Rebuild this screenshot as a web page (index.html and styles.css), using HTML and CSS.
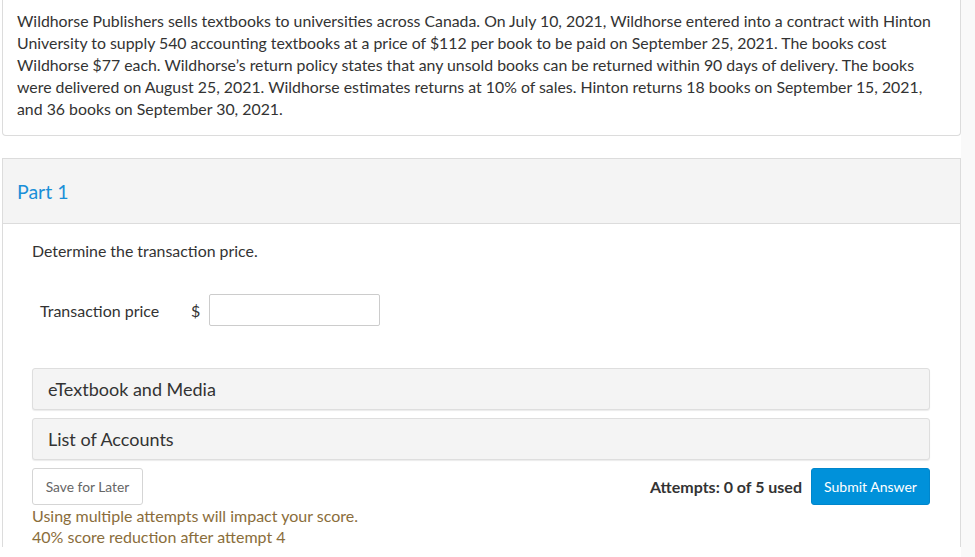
FILE: index.html
```html
<!DOCTYPE html>
<html>
<head>
<meta charset="utf-8">
<link rel="stylesheet" href="styles.css">
</head>
<body>
<div class="page">
  <div class="question-card">
    <p class="question-text">Wildhorse Publishers sells textbooks to universities across Canada. On July 10, 2021, Wildhorse entered into a contract with Hinton University to supply 540 accounting textbooks at a price of $112 per book to be paid on September 25, 2021. The books cost Wildhorse $77 each. Wildhorse’s return policy states that any unsold books can be returned within 90 days of delivery. The books were delivered on August 25, 2021. Wildhorse estimates returns at 10% of sales. Hinton returns 18 books on September 15, 2021, and 36 books on September 30, 2021.</p>
  </div>
  <div class="part-card">
    <div class="part-header">Part 1</div>
    <div class="part-body">
      <p class="prompt">Determine the transaction price.</p>
      <div class="answer-row">
        <span class="answer-label">Transaction price</span>
        <span class="currency">$</span>
        <input class="answer-input" type="text">
      </div>
      <div class="accordion">eTextbook and Media</div>
      <div class="accordion">List of Accounts</div>
      <div class="actions">
        <button class="btn-save">Save for Later</button>
        <div class="actions-right">
          <span class="attempts">Attempts: 0 of 5 used</span>
          <button class="btn-submit">Submit Answer</button>
        </div>
      </div>
      <p class="warning">Using multiple attempts will impact your score.<br>40% score reduction after attempt 4</p>
    </div>
  </div>
</div>
</body>
</html>
```
FILE: styles.css
```css
html, body {
  margin: 0;
  padding: 0;
}
body {
  background: #f9f9f9;
  font-family: Lato, "Open Sans", sans-serif;
  color: #333;
}
.page {
  width: 961px;
  height: 557px;
  background: #fff;
  overflow: hidden;
}
.question-card {
  margin-left: 2px;
  border: 1px solid #dcdcdc;
  border-top: none;
  border-radius: 0 0 4px 4px;
  padding: 10px 20px 14px 14px;
  height: 111px;
  box-sizing: content-box;
}
.question-text {
  margin: 0;
  font-size: 15.85px;
  line-height: 22px;
  color: #333;
}
.part-card {
  margin: 22px 0 0 2px;
  border: 1px solid #dcdcdc;
  border-bottom: none;
}
.part-header {
  background: #f4f4f4;
  border-bottom: 1px solid #dcdcdc;
  display: flex;
  align-items: center;
  padding-left: 14px;
  font-size: 19.5px;
  color: #1a8fd8;
  padding-top: 1px;
  box-sizing: border-box;
  height: 65px;
}
.part-body {
  padding: 16px 30px 0 29px;
}
.prompt {
  margin: 0;
  font-size: 15.9px;
  line-height: 22px;
}
.answer-row {
  display: flex;
  align-items: center;
  margin-top: 32px;
  padding-left: 8px;
  height: 32px;
}
.answer-label {
  font-size: 16px;
  width: 151px;
}
.currency {
  font-size: 16px;
  width: 18px;
}
.answer-input {
  width: 171px;
  height: 32px;
  box-sizing: border-box;
  border: 1px solid #ccc;
  border-radius: 2px;
  margin: 0;
  padding: 0 6px;
  font-family: inherit;
}
.accordion {
  height: 42px;
  box-sizing: border-box;
  background: #f4f4f4;
  border: 1px solid #dedede;
  border-radius: 3px;
  box-shadow: 0 1px 1px rgba(0,0,0,0.08);
  display: flex;
  align-items: center;
  padding-left: 15px;
  font-size: 18px;
  color: #333;
  margin-bottom: 8px;
}
.answer-row + .accordion {
  margin-top: 42px;
}
.actions {
  display: flex;
  justify-content: space-between;
  align-items: center;
  margin-top: 3px;
}
.actions-right {
  display: flex;
  align-items: center;
  gap: 9px;
}
.btn-save {
  height: 37px;
  width: 111px;
  background: #fff;
  border: 1px solid #d5d5d5;
  border-radius: 3px;
  font-family: inherit;
  font-size: 13.8px;
  color: #666;
  padding: 0;
}
.attempts {
  font-size: 16px;
  font-weight: bold;
  color: #333;
}
.btn-submit {
  height: 37px;
  width: 119px;
  background: #0091da;
  border: 1px solid #0086cc;
  border-radius: 3px;
  font-family: inherit;
  font-size: 14px;
  color: #fff;
  padding: 0;
}
.warning {
  margin: 0;
  font-size: 16px;
  line-height: 21px;
  color: #8a6d3b;
}
```
